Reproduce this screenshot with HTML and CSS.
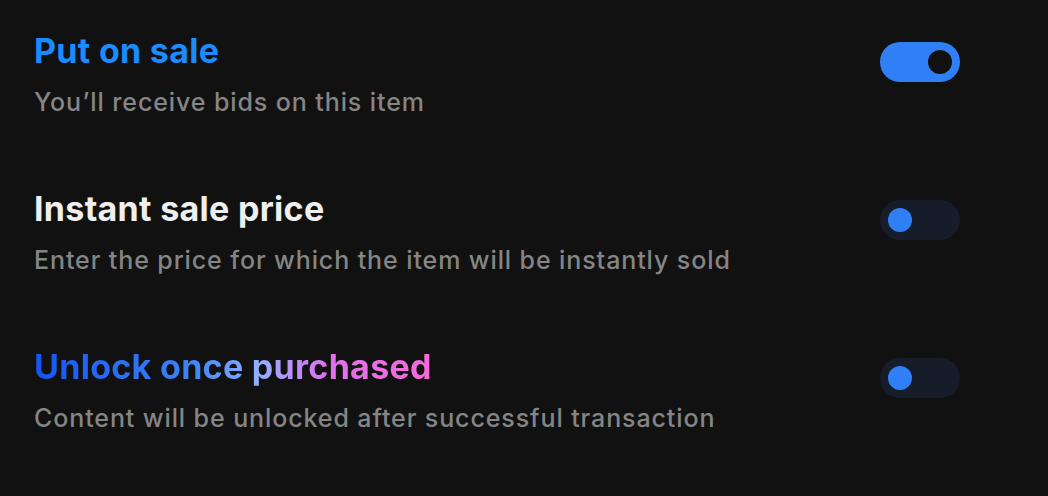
FILE: index.html
```html
<!DOCTYPE html>
<html lang="en">
<head>
    <meta charset="UTF-8">
    <meta name="viewport" content="width=device-width, initial-scale=1.0">
    <title>Sale options</title>
    <link rel="stylesheet" href="styles.css">
</head>
<body>
    <div class="options">
        <div class="option">
            <div class="text">
                <h2 class="title blue">Put on sale</h2>
                <p class="desc">You’ll receive bids on this item</p>
            </div>
            <label class="switch on"><span class="knob"></span></label>
        </div>

        <div class="option">
            <div class="text">
                <h2 class="title">Instant sale price</h2>
                <p class="desc">Enter the price for which the item will be instantly sold</p>
            </div>
            <label class="switch"><span class="knob"></span></label>
        </div>

        <div class="option">
            <div class="text">
                <h2 class="title rainbow">Unlock once purchased</h2>
                <p class="desc">Content will be unlocked after successful transaction</p>
            </div>
            <label class="switch"><span class="knob"></span></label>
        </div>
    </div>
</body>
</html>
```

FILE: styles.css
```css
body {
    margin: 0;
    background-color: #111111;
    font-family: Inter, "Noto Sans", sans-serif;
}
.options {
    display: flex;
    flex-direction: column;
    gap: 72px;
    padding: 31px 88px 0 34px;
}
.option {
    display: flex;
    justify-content: space-between;
    align-items: flex-start;
}
.title {
    margin: 0;
    font-size: 34px;
    line-height: 40px;
    font-weight: 700;
    color: #efefef;
    letter-spacing: 0.3px;
}
.title.blue {
    color: #1a8cff;
}
.title.rainbow {
    background: linear-gradient(90deg, #1455f5 0%, #3d84f5 40%, #8fb0ff 56%, #e070f0 74%, #f66ad8 100%);
    -webkit-background-clip: text;
    background-clip: text;
    color: transparent;
    display: inline-block;
}
.desc {
    margin: 16px 0 0;
    font-size: 25px;
    line-height: 30px;
    font-weight: 500;
    letter-spacing: 0.9px;
    color: #858585;
}
.switch {
    display: flex;
    align-items: center;
    width: 80px;
    height: 40px;
    margin-top: 11px;
    padding: 0 8px;
    box-sizing: border-box;
    border-radius: 20px;
    background-color: #161c2a;
}
.knob {
    width: 24px;
    height: 24px;
    border-radius: 50%;
    background-color: #2f80f7;
}
.switch.on {
    justify-content: flex-end;
    background-color: #2f80f7;
}
.switch.on .knob {
    background-color: #111111;
}
```
